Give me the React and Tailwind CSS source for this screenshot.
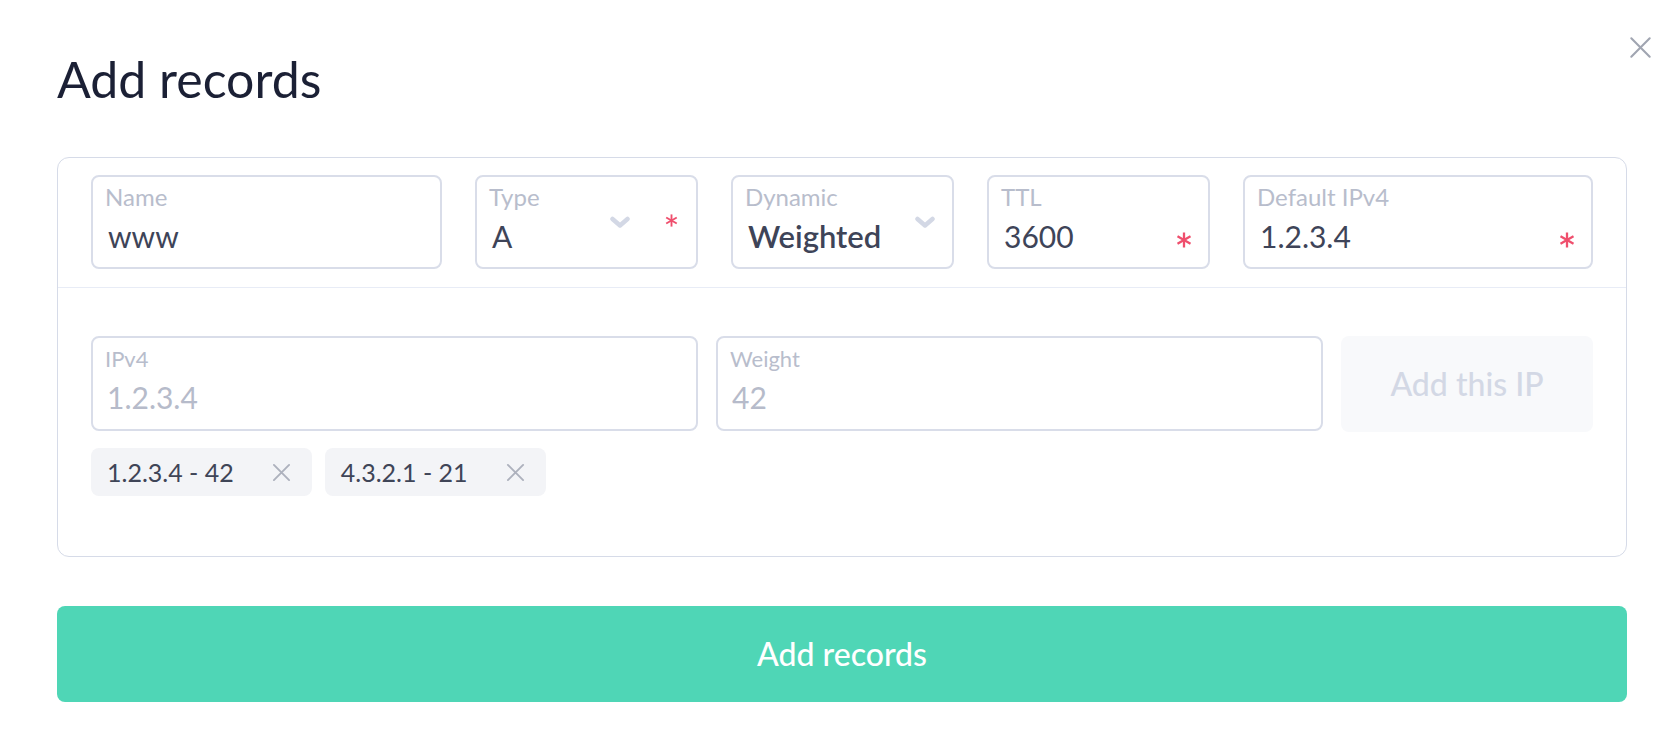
import React from 'react';

const Chevron = () => (
  <svg width="22" height="13" viewBox="0 0 22 13" fill="none">
    <path d="M3.5 3 L11 9.5 L18.5 3" stroke="#d3d8e5" strokeWidth="4.5" strokeLinecap="round" strokeLinejoin="round" />
  </svg>
);

const Asterisk = ({ size = 16 }) => (
  <svg width={size} height={size} viewBox="0 0 16 16" fill="none">
    <g stroke="#ef4f6d" strokeWidth="2.3" strokeLinecap="butt">
      <line x1="8" y1="0.5" x2="8" y2="15.5" />
      <line x1="1.5" y1="4.25" x2="14.5" y2="11.75" />
      <line x1="1.5" y1="11.75" x2="14.5" y2="4.25" />
    </g>
  </svg>
);

const Cross = ({ size, color, width = 2 }) => (
  <svg width={size} height={size} viewBox="0 0 20 20" fill="none">
    <path d="M2 2 L18 18 M18 2 L2 18" stroke={color} strokeWidth={width} strokeLinecap="round" />
  </svg>
);

function Field({ label, value, bold, children }) {
  return (
    <div className="relative h-[94px] rounded-[8px] border-2 border-[#d9dde9] px-[12px] pt-[6px]">
      <div className="text-[24px] leading-[1.2] text-[#b8bdcc]">{label}</div>
      <div
        className={`mt-[6px] pl-[3px] leading-[1.2] text-[#3e4458] ${bold ? 'text-[31px] font-semibold' : 'text-[30px]'}`}
      >
        {value}
      </div>
      {children}
    </div>
  );
}

function IpField({ label, placeholder }) {
  return (
    <div className="flex-1 h-[95px] rounded-[8px] border-2 border-[#d9dde9] px-[12px] pt-[8px]">
      <div className="text-[22px] leading-[1.2] text-[#b8bdcc]">{label}</div>
      <div className="mt-[7px] pl-[2px] text-[30px] leading-[1.2] text-[#b6bbca]">{placeholder}</div>
    </div>
  );
}

function Tag({ text }) {
  return (
    <div className="h-[48px] rounded-[8px] bg-[#f3f4f7] pl-[16px] pr-[21px] flex items-center">
      <span className="text-[25px] leading-[1.2] text-[#3f4557]">{text}</span>
      <span className="ml-[38px] flex">
        <Cross size={19} color="#adb1bd" />
      </span>
    </div>
  );
}

export default function App() {
  return (
    <div className="relative min-h-screen bg-white font-['Lato','Liberation_Sans',sans-serif]">
      {/* close */}
      <button className="absolute right-[24px] top-[36px] flex">
        <Cross size={23} color="#a0a5b1" width={1.8} />
      </button>

      <div className="pl-[57px] pr-[49px] pt-[49px]">
        <h1 className="text-[50px] leading-[1.2] font-normal text-[#1b2035]">Add records</h1>

        <div className="mt-[48px] rounded-[12px] border border-[#d6dbe8]">
          <div className="grid grid-cols-[351px_223px_223px_223px_1fr] gap-x-[33px] px-[33px] pt-[17px] pb-[18px] border-b border-[#e8ecf6]">
            <Field label="Name" value="www" />
            <Field label="Type" value="A">
              <span className="absolute right-[65px] top-[39px] flex">
                <Chevron />
              </span>
              <span className="absolute right-[18px] top-[37px] flex">
                <Asterisk size={13} />
              </span>
            </Field>
            <Field label="Dynamic" value="Weighted" bold>
              <span className="absolute right-[16px] top-[39px] flex">
                <Chevron />
              </span>
            </Field>
            <Field label="TTL" value="3600">
              <span className="absolute right-[16px] top-[55px] flex">
                <Asterisk size={16} />
              </span>
            </Field>
            <Field label="Default IPv4" value="1.2.3.4">
              <span className="absolute right-[16px] top-[55px] flex">
                <Asterisk size={16} />
              </span>
            </Field>
          </div>

          <div className="px-[33px] pt-[48px] pb-[60px]">
            <div className="flex gap-[18px]">
              <IpField label="IPv4" placeholder="1.2.3.4" />
              <IpField label="Weight" placeholder="42" />
              <button className="w-[252px] h-[96px] rounded-[8px] bg-[#f8f9fb] text-[32px] font-medium text-[#d3d8e5]">
                Add this IP
              </button>
            </div>
            <div className="mt-[16px] flex gap-[13px]">
              <Tag text="1.2.3.4 - 42" />
              <Tag text="4.3.2.1 - 21" />
            </div>
          </div>
        </div>

        <button className="mt-[49px] w-full h-[96px] rounded-[8px] bg-[#4fd6b6] text-[32px] font-medium text-white">
          Add records
        </button>
      </div>
    </div>
  );
}
